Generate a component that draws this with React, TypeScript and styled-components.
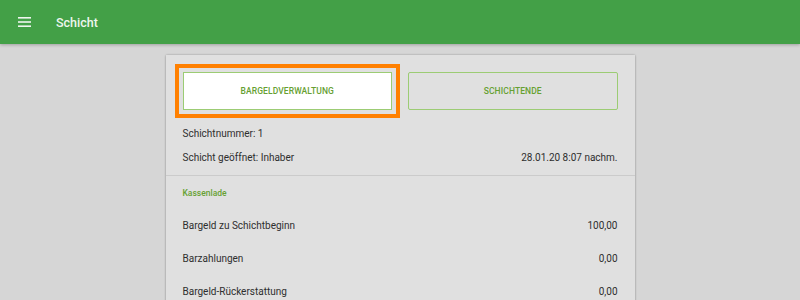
import React from 'react'
import styled, { createGlobalStyle } from 'styled-components'

const GlobalStyle = createGlobalStyle`
  html, body {
    margin: 0;
    padding: 0;
    background: #d6d6d6;
    font-family: Roboto, "Noto Sans", sans-serif;
  }
`

const Page = styled.div`
  width: 800px;
  height: 300px;
  overflow: hidden;
  background: #d6d6d6;
  display: flex;
  flex-direction: column;
`

const AppBar = styled.header`
  height: 44px;
  flex-shrink: 0;
  background: #43a047;
  display: flex;
  align-items: center;
  padding-left: 18px;
  gap: 24px;
  box-shadow: 0 1px 3px rgba(0, 0, 0, 0.25);
  position: relative;
  z-index: 1;
`

const Title = styled.h1`
  margin: 0;
  font-size: 12.5px;
  font-weight: 500;
  color: #eef6ee;
`

const Main = styled.main`
  flex: 1;
  display: flex;
  justify-content: center;
  padding-top: 11px;
`

const Card = styled.section`
  width: 469px;
  background: #e0e0e0;
  box-shadow: 0 0 2px rgba(0, 0, 0, 0.28), 0 1px 2px rgba(0, 0, 0, 0.12);
  align-self: flex-start;
`

const Section = styled.div`
  padding: 17px 17px 6px 17px;
`

const ButtonRow = styled.div`
  display: grid;
  grid-template-columns: 1fr 1fr;
  gap: 16px;
  margin-bottom: 11px;
`

const ActionButton = styled.button<{ $focused?: boolean }>`
  height: 38px;
  border: 1px solid #9ccc74;
  border-radius: ${(p) => (p.$focused ? '0' : '2px')};
  background: ${(p) => (p.$focused ? '#ffffff' : 'transparent')};
  color: #66a032;
  font-family: Roboto, sans-serif;
  font-size: 8.5px;
  font-weight: 500;
  letter-spacing: 0.1px;
  text-transform: uppercase;
  outline: ${(p) => (p.$focused ? '4px solid #ff8000' : 'none')};
  outline-offset: 4px;
  cursor: pointer;
`

const InfoRow = styled.div<{ $height: number }>`
  height: ${(p) => p.$height}px;
  display: flex;
  align-items: center;
  justify-content: space-between;
  font-size: 10px;
  color: #2e2e2e;
`

const Divider = styled.hr`
  margin: 0;
  border: none;
  border-top: 1px solid #cbcbcb;
`

const ListSection = styled.div`
  padding: 0 17px;
`

const SectionTitle = styled.div`
  height: 33px;
  display: flex;
  align-items: center;
  font-size: 8.5px;
  font-weight: 500;
  color: #66a032;
`

function MenuIcon(): JSX.Element {
  return (
    <svg width="14" height="12" viewBox="0 0 14 12">
      <rect x="0" y="1" width="13" height="1.6" fill="#eef6ee" />
      <rect x="0" y="5.2" width="13" height="1.6" fill="#eef6ee" />
      <rect x="0" y="9.4" width="13" height="1.6" fill="#eef6ee" />
    </svg>
  )
}

const cashRows: [string, string][] = [
  ['Bargeld zu Schichtbeginn', '100,00'],
  ['Barzahlungen', '0,00'],
  ['Bargeld-Rückerstattung', '0,00'],
]

export default function App(): JSX.Element {
  return (
    <Page>
      <GlobalStyle />
      <AppBar>
        <MenuIcon />
        <Title>Schicht</Title>
      </AppBar>
      <Main>
        <Card>
          <Section>
            <ButtonRow>
              <ActionButton $focused>Bargeldverwaltung</ActionButton>
              <ActionButton>Schichtende</ActionButton>
            </ButtonRow>
            <InfoRow $height={24}>
              <span>Schichtnummer: 1</span>
            </InfoRow>
            <InfoRow $height={24}>
              <span>Schicht geöffnet: Inhaber</span>
              <span>28.01.20 8:07 nachm.</span>
            </InfoRow>
          </Section>
          <Divider />
          <ListSection>
            <SectionTitle>Kassenlade</SectionTitle>
            {cashRows.map(([label, value]) => (
              <InfoRow key={label} $height={33}>
                <span>{label}</span>
                <span>{value}</span>
              </InfoRow>
            ))}
          </ListSection>
        </Card>
      </Main>
    </Page>
  )
}
